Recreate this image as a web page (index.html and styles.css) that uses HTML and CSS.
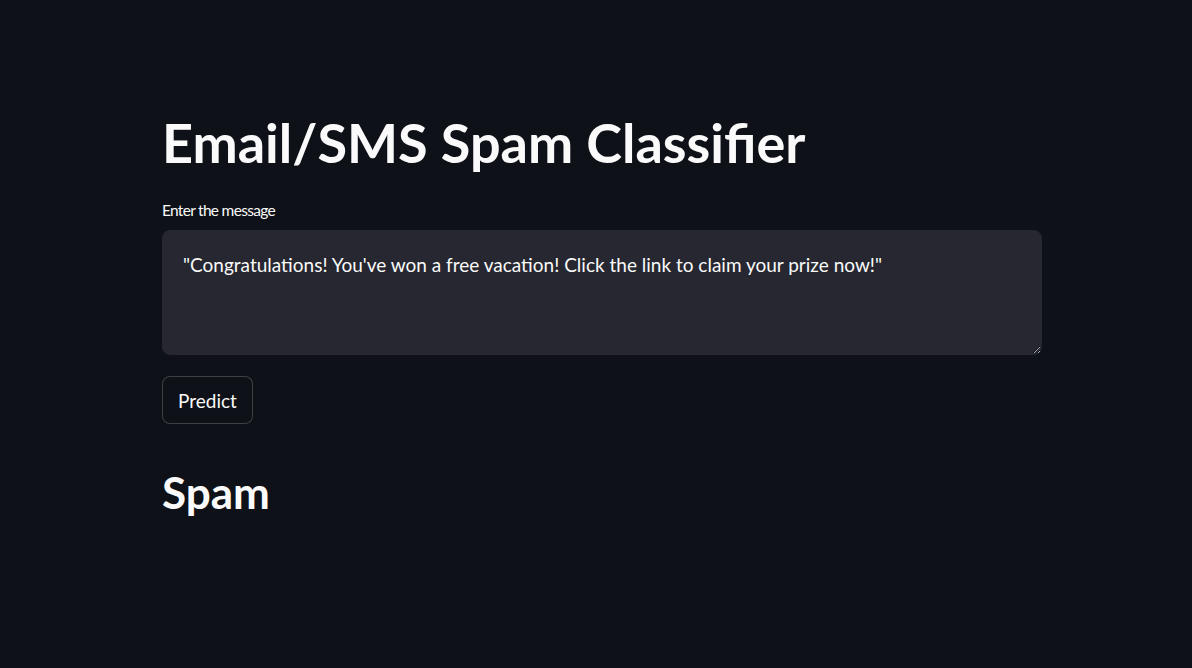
FILE: index.html
```html
<!DOCTYPE html>
<html lang="en">
<head>
<meta charset="utf-8">
<title>Email/SMS Spam Classifier</title>
<link rel="stylesheet" href="styles.css">
</head>
<body>
<main class="app">
  <h1 class="title">Email/SMS Spam Classifier</h1>
  <div class="field">
    <label class="label" for="msg">Enter the message</label>
    <textarea id="msg" class="input">"Congratulations! You've won a free vacation! Click the link to claim your prize now!"</textarea>
  </div>
  <div class="actions">
    <button class="btn" type="button">Predict</button>
  </div>
  <h2 class="result">Spam</h2>
</main>
</body>
</html>
```

FILE: styles.css
```css
html, body {
  margin: 0;
  padding: 0;
  background: #0e1117;
  color: #fafafa;
  font-family: "Lato", "Open Sans", sans-serif;
}

.app {
  display: flex;
  flex-direction: column;
  align-items: flex-start;
  width: 880px;
  padding: 108px 0 0 162px;
}

.title {
  margin: 0;
  font-size: 54px;
  font-weight: 700;
  line-height: 70px;
  letter-spacing: 0;
}

.field {
  display: flex;
  flex-direction: column;
  width: 100%;
  margin-top: 22px;
}

.label {
  font-size: 15.5px;
  line-height: 20px;
  letter-spacing: -0.7px;
  margin-bottom: 10px;
}

.input {
  box-sizing: border-box;
  width: 100%;
  height: 125px;
  margin: 0;
  padding: 20px 20px;
  background: #262730;
  color: #fafafa;
  border: 1px solid #262730;
  border-radius: 8px;
  font-family: inherit;
  font-size: 19px;
  line-height: 28px;
  resize: vertical;
  outline: none;
}

.actions {
  margin-top: 21px;
}

.btn {
  box-sizing: border-box;
  height: 48px;
  padding: 0 15px;
  background: #0e1117;
  color: #fafafa;
  border: 1px solid rgba(250, 250, 250, 0.2);
  border-radius: 8px;
  font-family: inherit;
  font-size: 19px;
}

.result {
  margin: 42px 0 0;
  font-size: 44px;
  font-weight: 700;
  line-height: 52px;
}
```
